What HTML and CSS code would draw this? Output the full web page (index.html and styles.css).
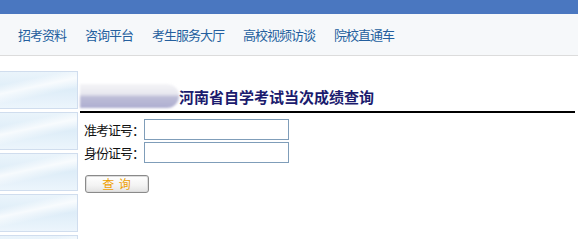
FILE: index.html
```html
<!DOCTYPE html>
<html lang="zh-CN">
<head>
<meta charset="utf-8">
<title>成绩查询</title>
<link rel="stylesheet" href="styles.css">
</head>
<body>
<div class="topbar"></div>
<nav class="nav">
  <a class="nav-item">招考资料</a>
  <a class="nav-item">咨询平台</a>
  <a class="nav-item">考生服务大厅</a>
  <a class="nav-item">高校视频访谈</a>
  <a class="nav-item">院校直通车</a>
</nav>
<div class="main">
  <aside class="sidebar">
    <div class="side-box"></div>
    <div class="side-box"></div>
    <div class="side-box"></div>
    <div class="side-box"></div>
    <div class="side-box"></div>
  </aside>
  <section class="content">
    <div class="title-row">
      <div class="blurred"></div>
      <h1 class="title">河南省自学考试当次成绩查询</h1>
    </div>
    <form class="form">
      <div class="form-row">
        <label class="label">准考证号：</label>
        <input class="field" type="text">
      </div>
      <div class="form-row">
        <label class="label">身份证号：</label>
        <input class="field" type="text">
      </div>
      <button class="btn" type="button">查 询</button>
    </form>
  </section>
</div>
</body>
</html>
```
FILE: styles.css
```css
* { box-sizing: border-box; }
html, body { margin: 0; padding: 0; background: #fff; overflow: hidden; }
body {
  font-family: "Noto Sans CJK SC", "Microsoft YaHei", sans-serif;
  width: 578px;
  height: 240px;
}
.topbar {
  height: 14px;
  background: #4a77c0;
}
.nav {
  height: 42px;
  background: #f6f8fa;
  border-bottom: 1px solid #dcdcdc;
  display: flex;
  align-items: center;
  padding-left: 18px;
  gap: 19px;
}
.nav-item {
  font-size: 13px;
  letter-spacing: -1px;
  color: #245f9e;
  line-height: 16px;
}
.main {
  display: flex;
  padding-top: 15px;
  height: 183px;
  overflow: hidden;
}
.sidebar {
  width: 78px;
  flex: none;
  display: flex;
  flex-direction: column;
  gap: 3px;
}
.side-box {
  height: 38px;
  flex: none;
  border: 1px solid #d0ddee;
  border-left: none;
  background:
    linear-gradient(168deg, rgba(255,255,255,0) 25%, rgba(255,255,255,0.75) 42%, rgba(255,255,255,0) 62%),
    linear-gradient(180deg, #eaf4fb 0%, #deedf8 50%, #ecf5fc 100%);
}
.content {
  width: 495px;
  margin-left: 2px;
}
.title-row {
  height: 42px;
  border-bottom: 2px solid #000;
  display: flex;
  align-items: flex-end;
  padding-bottom: 3px;
}
.blurred {
  width: 99px;
  height: 24px;
  border-radius: 0 12px 12px 0;
  background:
    linear-gradient(180deg, #f4f4f7 0%, #e8e8ef 42%, #bdbdd8 55%, #aeaed0 100%);
  filter: blur(1.2px);
}
.title {
  margin: 0;
  font-size: 15px;
  font-weight: bold;
  color: #1b1b6e;
  line-height: 20px;
  padding-bottom: 1px;
}
.form {
  padding: 6px 0 0 4px;
  display: flex;
  flex-direction: column;
  gap: 2px;
  align-items: flex-start;
}
.form-row {
  display: flex;
  align-items: center;
}
.label {
  width: 60px;
  font-size: 13px;
  letter-spacing: -1px;
  color: #111;
  line-height: 21px;
}
.field {
  width: 145px;
  height: 21px;
  margin: 0;
  border: 1px solid #7f9db9;
  background: #fff;
  padding: 0 2px;
}
.btn {
  margin-top: 10px;
  margin-left: 1px;
  width: 64px;
  height: 18px;
  padding: 0;
  border: 1px solid #8a8a8a;
  border-radius: 3px;
  box-shadow: inset 0 0 0 1px #dcdcdc;
  background: linear-gradient(180deg, #ffffff 0%, #f3f3f3 60%, #e2e2e2 100%);
  color: #eea000;
  font-family: "Noto Sans CJK SC", sans-serif;
  font-size: 12px;
  line-height: 14px;
  letter-spacing: 1px;
}
```
